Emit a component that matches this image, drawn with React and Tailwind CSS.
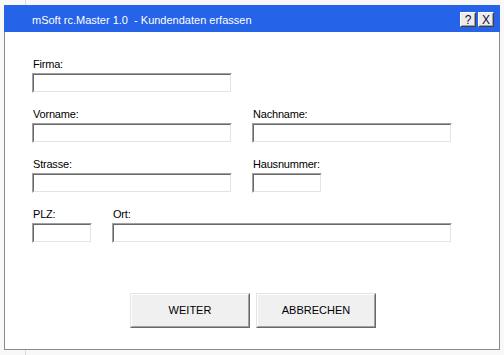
function Field({ className }) {
  return (
    <div className={`h-[20px] border border-[#a0a0a0] border-r-white border-b-white ${className}`}>
      <div className="h-full w-full bg-white border border-[#696969] border-r-[#e3e3e3] border-b-[#e3e3e3]" />
    </div>
  );
}

function Label({ children }) {
  return <div className="h-[14px] leading-[11px] text-[11px] tracking-[-0.2px] text-black pl-[1px]">{children}</div>;
}

function CapBtn({ children }) {
  return (
    <div className="w-[16px] h-[15px] border border-white border-r-[#404040] border-b-[#404040]">
      <div className="w-full h-full bg-[#ececec] border border-transparent border-r-[#a0a0a0] border-b-[#a0a0a0] flex items-center justify-center text-[12px] leading-none text-[#0a0a3a]">
        {children}
      </div>
    </div>
  );
}

function Btn({ children }) {
  return (
    <div className="w-[120px] h-[35px] border border-[#e3e3e3] border-r-[#696969] border-b-[#696969]">
      <div className="w-full h-full bg-[#f0f0f0] border border-white border-r-[#a0a0a0] border-b-[#a0a0a0] flex items-center justify-center text-[11px] text-black">
        {children}
      </div>
    </div>
  );
}

export default function App() {
  return (
    <div className="w-[504px] h-[355px] bg-[#f8f8f8] bg-[linear-gradient(to_right,transparent_25px,#dadada_25px,#dadada_26px,transparent_26px)] pt-[5px] pl-[4px] font-['Liberation_Sans',Arial,sans-serif] overflow-hidden">
      <div className="w-[496px] h-[345px] flex flex-col">
        <div className="h-[27px] bg-[#2563e8] flex items-center pl-[28px] pr-[6px]">
          <div className="flex-1 text-white text-[11px] pt-[3px] whitespace-pre">mSoft rc.Master 1.0  - Kundendaten erfassen</div>
          <div className="flex gap-[2px] mt-[2px]">
            <CapBtn>?</CapBtn>
            <CapBtn>X</CapBtn>
          </div>
        </div>
        <div className="flex-1 bg-white border border-t-0 border-[#8a8a8a] pl-[27px] pt-[27px]">
          <div className="flex flex-col gap-[16px]">
            <div>
              <Label>Firma:</Label>
              <Field className="w-[200px]" />
            </div>
            <div className="flex gap-[20px]">
              <div>
                <Label>Vorname:</Label>
                <Field className="w-[200px]" />
              </div>
              <div>
                <Label>Nachname:</Label>
                <Field className="w-[200px]" />
              </div>
            </div>
            <div className="flex gap-[20px]">
              <div>
                <Label>Strasse:</Label>
                <Field className="w-[200px]" />
              </div>
              <div>
                <Label>Hausnummer:</Label>
                <Field className="w-[70px]" />
              </div>
            </div>
            <div className="flex gap-[20px]">
              <div>
                <Label>PLZ:</Label>
                <Field className="w-[60px]" />
              </div>
              <div>
                <Label>Ort:</Label>
                <Field className="w-[340px]" />
              </div>
            </div>
          </div>
          <div className="flex gap-[6px] mt-[50px] ml-[98px]">
            <Btn>WEITER</Btn>
            <Btn>ABBRECHEN</Btn>
          </div>
        </div>
      </div>
    </div>
  );
}
